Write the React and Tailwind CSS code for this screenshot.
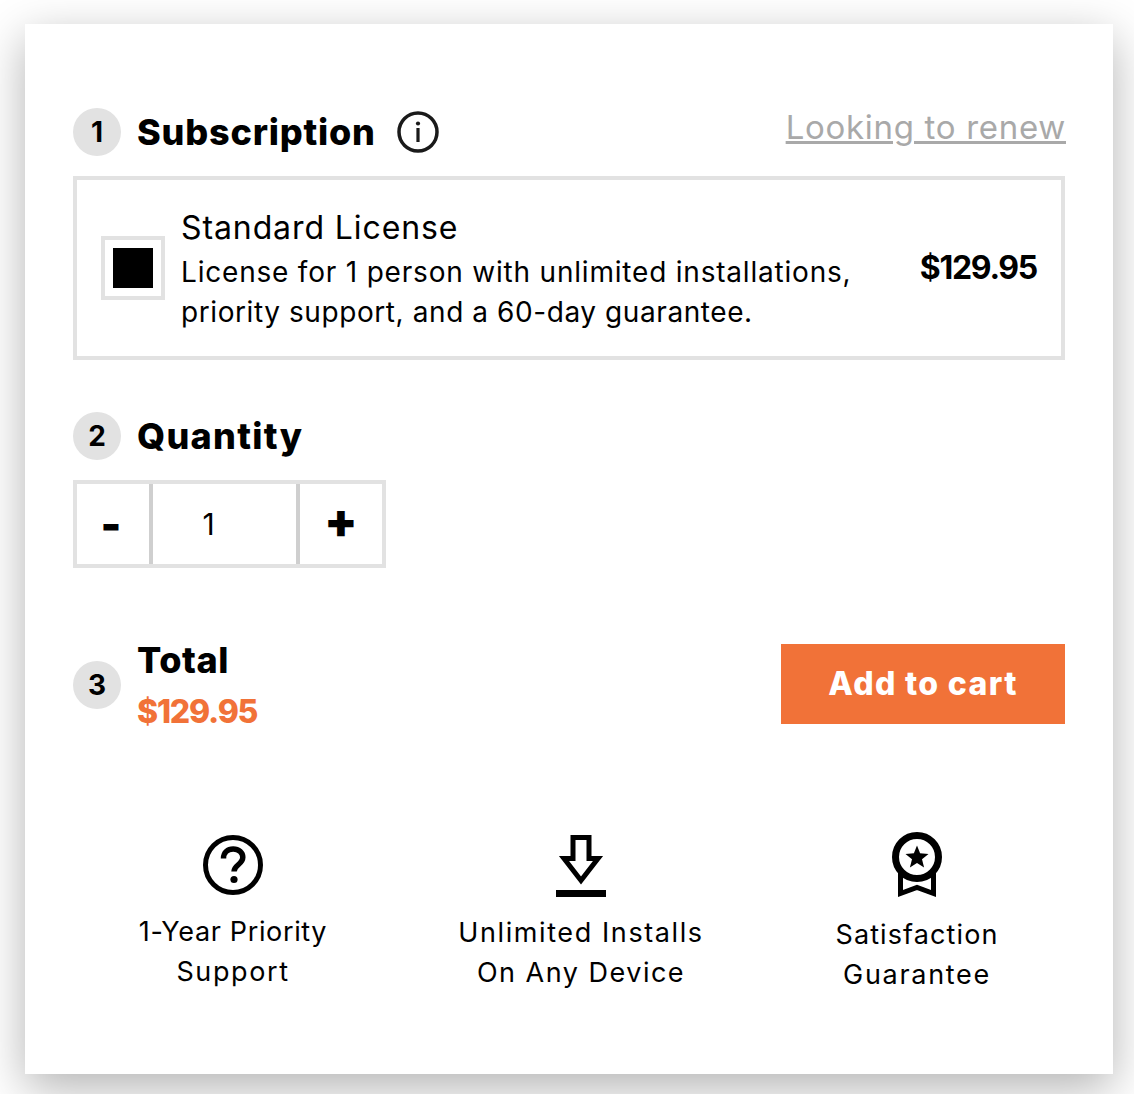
const StepBadge = ({ n }) => (
  <div className="flex size-12 shrink-0 items-center justify-center rounded-full bg-[#e2e2e2] text-[28px] font-bold text-black">
    {n}
  </div>
);

const InfoIcon = () => (
  <svg width="42" height="42" viewBox="0 0 42 42" fill="none" className="shrink-0">
    <circle cx="21" cy="21" r="19" stroke="#1a1a1a" strokeWidth="3.5" />
    <circle cx="21" cy="12.5" r="2.1" fill="#1a1a1a" />
    <rect x="19.4" y="17" width="3.2" height="14" fill="#1a1a1a" />
  </svg>
);

const HelpIcon = () => (
  <svg width="60" height="60" viewBox="0 0 60 60" fill="none">
    <circle cx="30" cy="30" r="27.5" stroke="#000" strokeWidth="5" />
    <path d="M20.5 23.5c0-6 4.2-9.5 9.7-9.5 5.6 0 9.6 3.5 9.600 8.3 0 7.2-8.800 7.600-8.800 14.200" stroke="#000" strokeWidth="5.500" />
    <circle cx="31" cy="44.500" r="3.600" fill="#000" />
  </svg>
);

const DownloadIcon = () => (
  <svg width="50" height="63" viewBox="0 0 50 63" fill="none">
    <path d="M17 3.500h16v21h9L25 46.500 8 24.500h9z" stroke="#000" strokeWidth="5" />
    <rect x="0" y="56" width="50" height="7" fill="#000" />
  </svg>
);

const RibbonIcon = () => (
  <svg width="50" height="66" viewBox="0 0 50 66" fill="none">
    <path d="M8.500 40v21.500l16.500-6 16.500 6V40" stroke="#000" strokeWidth="5" />
    <circle cx="25" cy="25" r="21.500" fill="#fff" stroke="#000" strokeWidth="7" />
    <path d="M25 13.500l3.100 7.800 8.400.6-6.500 5.400 2.100 8.200-7.100-4.500-7.100 4.500 2.100-8.200-6.500-5.400 8.400-.6z" fill="#000" />
  </svg>
);

const Perk = ({ icon, children, className }) => (
  <div className={`flex flex-col items-center text-center ${className}`}>
    {icon}
    <p className="text-[27px] leading-[40px] text-black">{children}</p>
  </div>
);

export default function App() {
  return (
    <div className="min-h-[1094px] overflow-hidden bg-white pl-[25px] pr-[21px] pt-6 font-['Inter','Liberation_Sans',sans-serif]">
      <div className="h-[1050px] bg-white px-12 pt-[84px] shadow-[0_14px_44px_rgba(0,0,0,0.3)]">
        <div className="flex h-12 items-center">
          <StepBadge n="1" />
          <h2 className="ml-4 text-[36px] font-extrabold tracking-[0.8px] text-black">Subscription</h2>
          <div className="ml-[21px]">
            <InfoIcon />
          </div>
          <a className="-mr-px mb-2 ml-auto text-[33px] tracking-[0.7px] text-[#a9a9a9] underline">Looking to renew</a>
        </div>

        <div className="mt-5 flex h-[184px] items-center border-4 border-[#e2e2e2] px-6">
          <div className="flex size-16 shrink-0 items-center justify-center border-4 border-[#e2e2e2]">
            <div className="size-10 bg-black" />
          </div>
          <div className="ml-4 flex-1 pt-[2px] text-black">
            <p className="mb-[2px] text-[32px] leading-[44px] tracking-[0.9px]">Standard License</p>
            <p className="text-[28px] leading-[40px] tracking-[0.8px]">
              License for 1 person with unlimited installations,
              <br />
              <span className="tracking-[0.58px]">priority support, and a 60-day guarantee.</span>
            </p>
          </div>
          <p className="text-[32px] font-bold tracking-[-1.3px] text-black">$129.95</p>
        </div>

        <div className="mt-[52px] flex h-12 items-center">
          <StepBadge n="2" />
          <h2 className="ml-4 text-[36px] font-extrabold tracking-[1.3px] text-black">Quantity</h2>
        </div>

        <div className="mt-5 flex h-[88px] w-[313px] border-4 border-[#e2e2e2] text-black">
          <div className="flex w-[76px] items-center justify-center border-r-4 border-[#cfcfcf] pr-[4px] text-[44px] font-black">-</div>
          <div className="flex w-[147px] items-center justify-center border-r-4 border-[#cfcfcf] pr-[32px] text-[30px]">1</div>
          <div className="flex flex-1 items-center justify-center pb-[6px] text-[48px] font-black">+</div>
        </div>

        <div className="mt-[72px] flex h-[90px] items-center justify-between">
          <div className="flex items-center">
            <StepBadge n="3" />
            <div className="ml-4">
              <p className="text-[36px] font-extrabold leading-[44px] tracking-[0.6px] text-black">Total</p>
              <p className="mt-[9px] text-[32px] font-extrabold leading-[42px] tracking-[-1.2px] text-[#f17238]">$129.95</p>
            </div>
          </div>
          <button className="mb-[2px] h-20 w-[284px] bg-[#f17238] text-[32px] font-extrabold tracking-[1.35px] text-white">Add to cart</button>
        </div>

        <div className="mt-[103px] flex items-start">
          <Perk className="ml-[58px] w-[204px] pt-[2px]" icon={<div className="mb-[17px]"><HelpIcon /></div>}>
            <span className="tracking-[0.65px]">1-Year Priority</span>
            <br />
            <span className="tracking-[1.6px]">Support</span>
          </Perk>
          <Perk className="ml-[101px] w-[290px] pt-[1px]" icon={<div className="mb-[16px]"><DownloadIcon /></div>}>
            <span className="tracking-[1.6px]">Unlimited Installs</span>
            <br />
            <span className="tracking-[1.5px]">On Any Device</span>
          </Perk>
          <Perk className="ml-[101px] w-[180px]" icon={<div className="-mt-[1px] mb-[17px]"><RibbonIcon /></div>}>
            <span className="tracking-[1.1px]">Satisfaction</span>
            <br />
            <span className="tracking-[1.7px]">Guarantee</span>
          </Perk>
        </div>
      </div>
    </div>
  );
}
